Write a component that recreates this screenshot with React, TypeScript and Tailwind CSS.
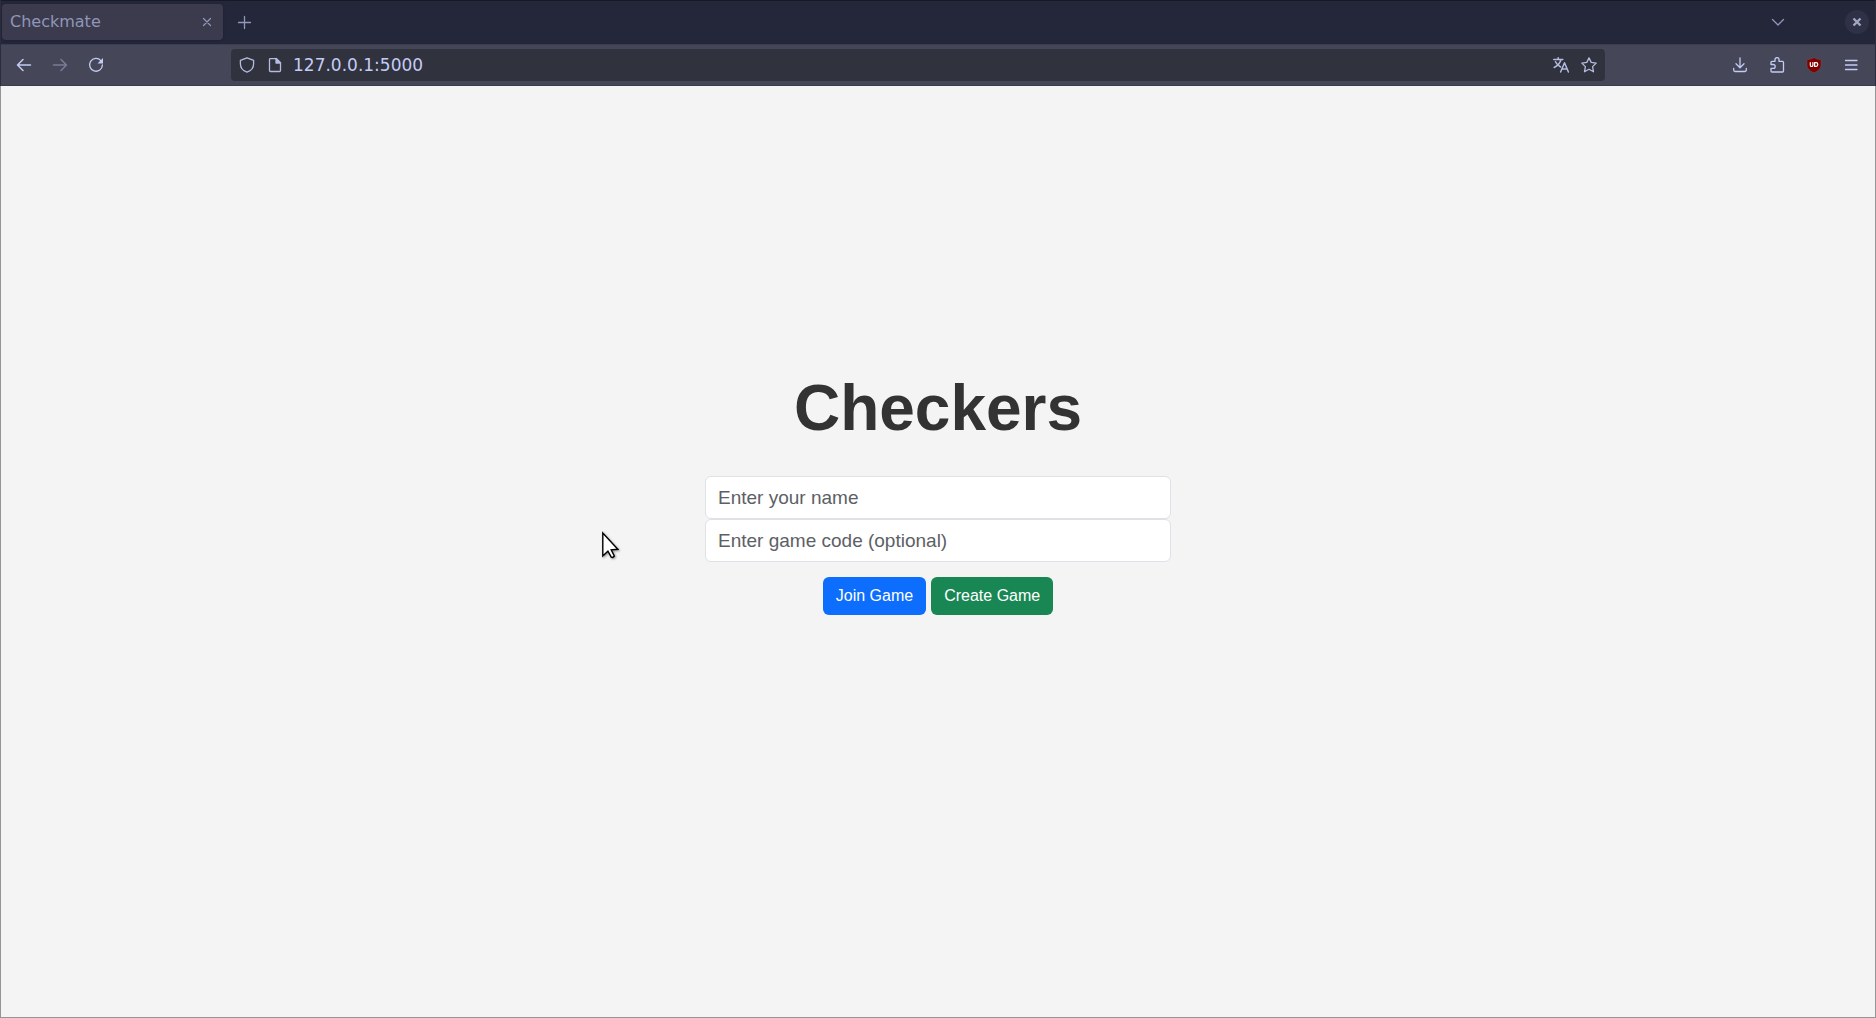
import React from "react";

type IconProps = { children: React.ReactNode; className?: string };

function Icon({ children, className = "" }: IconProps) {
  return (
    <svg
      viewBox="0 0 16 16"
      fill="none"
      stroke="currentColor"
      strokeWidth="1.3"
      strokeLinecap="round"
      strokeLinejoin="round"
      aria-hidden="true"
      className={`size-4 shrink-0 ${className}`}
    >
      {children}
    </svg>
  );
}

type ToolButtonProps = { label: string; children: React.ReactNode; disabled?: boolean; className?: string };

function ToolButton({ label, children, disabled, className = "w-9" }: ToolButtonProps) {
  return (
    <button
      type="button"
      aria-label={label}
      disabled={disabled}
      className={`flex h-8 items-center justify-center disabled:opacity-40 ${className}`}
    >
      {children}
    </button>
  );
}

function TabStrip() {
  return (
    <div className="flex h-11 items-center border-t border-[#181926] bg-[#24273a] pr-[6px] pb-px pl-px">
      <div className="flex h-9 w-[221px] items-center justify-between rounded bg-[#3c3b4d] pr-1 pl-2 text-[#8f96b8] shadow-sm">
        <span className="text-base">Checkmate</span>
        <ToolButton label="Close tab" className="w-6">
          <Icon>
            <path d="M4.5 4.5l7 7M11.5 4.5l-7 7" />
          </Icon>
        </ToolButton>
      </div>
      <ToolButton label="New tab" className="ml-[3px] w-9 text-[#9097b8]">
        <Icon>
          <path d="M8.5 2.5v12M2.5 8.5h12" />
        </Icon>
      </ToolButton>
      <ToolButton label="List all tabs" className="mr-[49px] ml-auto w-9 text-[#9097b8]">
        <Icon>
          <path d="M2.5 5.5L8 11l5.5-5.5" />
        </Icon>
      </ToolButton>
      <button
        type="button"
        aria-label="Close window"
        className="flex size-6 items-center justify-center rounded-full bg-[#2f3246] text-[#a0a6c4]"
      >
        <Icon>
          <path d="M4.5 4.5l7 7M11.5 4.5l-7 7" strokeWidth="2.4" strokeLinecap="butt" />
        </Icon>
      </button>
    </div>
  );
}

function Toolbar() {
  return (
    <div className="flex h-[42px] items-center border-y border-t-[#3b3c50] border-b-[#3a3b4c] bg-[#464659] text-[#c3ccf4]">
      <div className="flex w-[230px] shrink-0 pl-[5px]">
        <ToolButton label="Back">
          <Icon>
            <path d="M1.5 8h13M7 2.5L1.500 8L7 13.5" strokeWidth="1.5" />
          </Icon>
        </ToolButton>
        <ToolButton label="Forward" disabled>
          <Icon>
            <path d="M1.5 8h13M9 2.5L14.500 8L9 13.5" strokeWidth="1.5" />
          </Icon>
        </ToolButton>
        <ToolButton label="Reload">
          <Icon>
            <path d="M12.8 3.600A6.400 6.400 0 1 0 14.400 8" />
            <path d="M15 1v5.500H9.500z" fill="currentColor" stroke="none" />
          </Icon>
        </ToolButton>
      </div>
      <div className="flex h-8 min-w-0 flex-1 items-center rounded bg-[#30323e] px-[2px]">
        <ToolButton label="Tracking protection" className="w-7 text-[#b4bce0]">
          <Icon>
            <path d="M8 .8L14.600 3.400V6.800C14.600 10.700 11.800 14 8 15.200C4.200 14 1.400 10.700 1.400 6.800V3.400z" />
          </Icon>
        </ToolButton>
        <ToolButton label="Site information" className="w-7 text-[#b4bce0]">
          <Icon>
            <path d="M3.500 1.600H9.500L13.500 5.600V13.500a1 1 0 0 1-1 1h-9a1 1 0 0 1-1-1v-11a.9.9 0 0 1 1-.9z" />
            <path d="M9 1.500V6h4.500z" fill="currentColor" />
          </Icon>
        </ToolButton>
        <input
          aria-label="Address"
          defaultValue="127.0.0.1:5000"
          className="ml-1 h-8 min-w-0 flex-1 bg-transparent text-[17px] text-[#c3ccf4] outline-none"
        />
        <ToolButton label="Translate page" className="w-7 text-[#b4bce0]">
          <Icon>
            <path d="M.7 2.500H9.800M5.200 .8V2.500M8 2.500C7.200 5.800 4.500 8.800 1.200 10.500M2.500 4.800C3.600 7.200 5.300 8.900 7.600 10" strokeWidth="1.5" />
            <path d="M7.600 15L11.500 5.800L15.400 15M9 12h5" strokeWidth="1.5" />
          </Icon>
        </ToolButton>
        <ToolButton label="Bookmark this page" className="w-7 text-[#b4bce0]">
          <Icon>
            <path d="M8 .9L10.200 5.400L15.200 6.100L11.600 9.600L12.500 14.800L8 12.300L3.500 14.800L4.400 9.600L.8 6.100L5.800 5.400z" />
          </Icon>
        </ToolButton>
      </div>
      <div className="flex w-[270px] shrink-0 justify-end pr-[6px]">
        <ToolButton label="Downloads" className="w-[37px]">
          <Icon>
            <path d="M8 .8V10.500M4 6.700L8 10.700L12 6.700M1.700 11.500V13a1.500 1.500 0 0 0 1.500 1.500h9.600a1.500 1.500 0 0 0 1.500-1.500V11.500" />
          </Icon>
        </ToolButton>
        <ToolButton label="Extensions" className="w-[37px]">
          <Icon>
            <path d="M2 7.500V5.300a1 1 0 0 1 1-1H6V2.600a2 2 0 0 1 4 0V4.300H13.500a1 1 0 0 1 1 1V14a1 1 0 0 1-1 1H3a1 1 0 0 1-1-1V11.300H4.300a1.900 1.900 0 0 0 0-3.800z" />
          </Icon>
        </ToolButton>
        <ToolButton label="uBlock Origin" className="w-[37px]">
          <Icon>
            <path
              d="M8 .5C10 2 12.500 2.500 15 2.600V8C15 12 11.500 14.300 8 15.700C4.500 14.300 1 12 1 8V2.600C3.500 2.500 6 2 8 .5z"
              fill="#800000"
              stroke="#6b5362"
              strokeWidth=".5"
            />
            <path d="M4.300 5.500V8.200a1.100 1.100 0 0 0 2.600 0V5.500M8.600 5.700H10a1.800 1.800 0 0 1 0 3.600H8.600z" stroke="#fff" strokeWidth="1.2" />
          </Icon>
        </ToolButton>
        <ToolButton label="Application menu" className="w-[37px]">
          <Icon>
            <path d="M2.500 3.500h11.500M2.500 8h11.500M2.500 12.500h11.500" />
          </Icon>
        </ToolButton>
      </div>
    </div>
  );
}

const fieldClass =
  "block h-[43px] w-full rounded-md border border-[#dee2e6] bg-white px-3 text-[19px] text-[#212529] outline-none placeholder:text-[#5c6065]";

function LobbyPage() {
  return (
    <main className="relative flex flex-1 flex-col items-center justify-center border-x border-b border-[#959595] bg-[#f4f4f4] pb-[118px] font-['Liberation_Sans',Arial,sans-serif]">
      <h1 className="mb-[29px] text-[64px] leading-[77px] font-bold text-[#333333]">Checkers</h1>
      <form className="w-full max-w-[466px]" onSubmit={(e) => e.preventDefault()}>
        <input aria-label="Your name" placeholder="Enter your name" className={fieldClass} />
        <input aria-label="Game code" placeholder="Enter game code (optional)" className={fieldClass} />
        <div className="mt-[15px] flex justify-center gap-[5px]">
          <button type="submit" className="h-[38px] rounded-md bg-[#0d6efd] px-[13px] text-base text-white">
            Join Game
          </button>
          <button type="button" className="h-[38px] rounded-md bg-[#198754] px-[13px] text-base text-white">
            Create Game
          </button>
        </div>
      </form>
      <svg
        viewBox="0 0 18 28"
        aria-hidden="true"
        className="pointer-events-none absolute top-[445px] left-[600px] h-7 w-[18px] drop-shadow-[1px_1px_1px_rgba(0,0,0,0.4)]"
      >
        <path
          d="M1.800 2V25L6.900 20.200L10.300 26.200Q12 27 13.300 25L10.200 18.800L16.800 18.300z"
          fill="#fff"
          stroke="#000"
          strokeWidth="1.4"
        />
      </svg>
    </main>
  );
}

export default function App() {
  return (
    <div className="flex min-h-screen flex-col font-['DejaVu_Sans',sans-serif]">
      <header className="border-x border-[#2b2c3c]">
        <TabStrip />
        <Toolbar />
      </header>
      <LobbyPage />
    </div>
  );
}
